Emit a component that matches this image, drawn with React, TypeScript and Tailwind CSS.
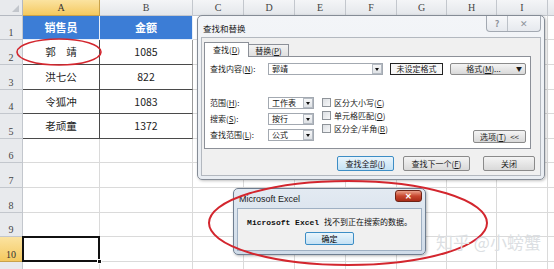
import React from "react"

const cjk = "font-['Noto_Sans_CJK_SC',sans-serif]"
const serif = "font-['Liberation_Serif','Noto_Sans_CJK_SC',serif]"

const letters = ["A", "B", "C", "D", "E", "F", "G", "H", "I", "J"]
const data: Record<number, [string, string]> = {
  2: ["郭　靖", "1085"],
  3: ["洪七公", "822"],
  4: ["令狐冲", "1083"],
  5: ["老顽童", "1372"],
}
const rowNums = [1, 2, 3, 4, 5, 6, 7, 8, 9, 10, 11]

function Key({ k }: { k: string }) {
  return (
    <>
      (<span className="underline">{k}</span>)
    </>
  )
}

function Sheet() {
  return (
    <div className="grid grid-cols-[23px_77px_93px_51px_51px_51px_51px_50px_50px_51px_30px] grid-rows-[16px_24px_25px_25px_24px_25px_24px_25px_25px_24px_25px_20px]">
      {/* corner */}
      <div className="relative border-r border-b border-[#b4b9c1] bg-[#e8eaed]">
        <div className="absolute right-[3px] bottom-[3px] h-0 w-0 border-l-[7px] border-b-[7px] border-l-transparent border-b-[#c2c6cc]" />
      </div>
      {letters.map((l, i) => (
        <div
          key={l}
          className={
            i === 0
              ? `flex items-center justify-center border-r border-b border-[#c9a24a] bg-gradient-to-b from-[#fbe3a0] to-[#f4c95e] text-[10px] text-[#333] ${serif}`
              : `flex items-center justify-center border-r border-b border-[#c3c7cd] bg-gradient-to-b from-[#f4f5f7] to-[#e4e7eb] text-[10px] text-[#444] ${serif}`
          }
        >
          {l === "J" ? "" : l}
        </div>
      ))}
      {rowNums.map((r) => (
        <React.Fragment key={r}>
          <div
            className={
              r === 10
                ? `flex items-end justify-center border-r border-b border-[#c9a24a] bg-gradient-to-b from-[#fbe3a0] to-[#f4c95e] pb-[1px] text-[10px] leading-none text-[#333] ${serif}`
                : `flex items-end justify-center border-r border-b border-[#c3c7cd] bg-[#e8eaed] pb-[1px] text-[10px] leading-none text-[#444] ${serif}`
            }
          >
            {r === 11 ? "" : r}
          </div>
          {letters.map((l, c) => {
            if (r === 1 && c < 2)
              return (
                <div
                  key={l}
                  className={`flex items-center justify-center border-r border-b border-[#e6eef9] bg-[#3c7dd6] text-[11px] font-bold text-white ${cjk}`}
                >
                  {c === 0 ? "销售员" : "金额"}
                </div>
              )
            if (data[r] && c < 2)
              return (
                <div
                  key={l}
                  className={
                    c === 0
                      ? `flex items-center justify-center border-r border-b border-[#4a4a4a] bg-white text-[10.5px] text-[#222] ${cjk}`
                      : `flex items-center justify-center border-r border-b border-r-[#9a9a9a] border-b-[#4a4a4a] bg-white text-[10.5px] text-[#222] ${cjk}`
                  }
                >
                  {data[r][c]}
                </div>
              )
            if (r === 10 && c === 0)
              return (
                <div key={l} className="relative border-r border-b border-[#dadada] bg-white">
                  <div className="absolute -left-px -top-px -right-px -bottom-px border-2 border-[#111]" />
                  <div className="absolute -right-[3px] -bottom-[3px] h-[5px] w-[5px] border border-white bg-[#111]" />
                </div>
              )
            return <div key={l} className="border-r border-b border-[#dadada] bg-white" />
          })}
        </React.Fragment>
      ))}
    </div>
  )
}

function Combo({ value, w }: { value: string; w: string }) {
  return (
    <div className={`flex h-[12px] ${w} items-center border border-[#a3a9b1] bg-white`}>
      <span className="flex-1 pl-[3px] text-[8px] leading-none text-[#111]">{value}</span>
      <div className="flex h-[10px] w-[10px] items-center justify-center border border-[#b5bbc3] bg-gradient-to-b from-[#f6f7f8] to-[#dfe2e6]">
        <div className="h-0 w-0 border-x-[2.5px] border-t-[3px] border-x-transparent border-t-[#111]" />
      </div>
    </div>
  )
}

function Check({ children }: { children: React.ReactNode }) {
  return (
    <div className="flex h-[13px] items-center gap-[3px]">
      <div className="h-[9px] w-[9px] border border-[#8e9399] bg-gradient-to-br from-[#dcdfe3] to-[#f7f8f9]" />
      <span className="text-[8px] leading-none">{children}</span>
    </div>
  )
}

function Btn({
  children,
  w,
  def,
}: {
  children: React.ReactNode
  w: string
  def?: boolean
}) {
  return (
    <div
      className={
        def
          ? `flex h-[15px] ${w} items-center justify-center rounded-[2px] border border-[#3c8dc5] bg-gradient-to-b from-[#eaf5fc] to-[#c4e1f4] text-[8px] leading-none`
          : `flex h-[15px] ${w} items-center justify-center rounded-[2px] border border-[#8a8a8a] bg-gradient-to-b from-[#f4f4f4] to-[#d9d9d9] text-[8px] leading-none`
      }
    >
      {children}
    </div>
  )
}

function FindDialog() {
  return (
    <div
      className={`absolute left-[197px] top-[15px] flex h-[165px] w-[348px] flex-col rounded-[5px] border border-[#858c96] bg-gradient-to-b from-[#f3f5f8] to-[#e9edf2] text-[#1a1a1a] shadow-[1px_1px_3px_rgba(0,0,0,0.25)] ${cjk}`}
    >
      {/* title bar */}
      <div className="flex h-[21px] shrink-0 items-start justify-between">
        <span className="pl-[5px] pt-[8px] text-[8.5px] leading-none">查找和替换</span>
        <div className="mr-[3px] flex h-[16px] overflow-hidden rounded-b-[4px] border border-t-0 border-[#a3a9b2] bg-gradient-to-b from-[#f7f8fa] to-[#e6e9ee] text-[#8d939b]">
          <div className="flex w-[21px] items-center justify-center border-r border-[#bcc1c8] text-[9px] font-bold">?</div>
          <div className="flex w-[32px] items-center justify-center text-[9px]">✕</div>
        </div>
      </div>
      {/* client */}
      <div className="mx-[3px] flex h-[139px] flex-col border border-[#b3b8bf] bg-[#f0f0f0]">
        <div className="flex items-end pl-[2px] pt-[4px]">
          <div className="relative z-10 -mb-px flex h-[15px] w-[45px] items-center justify-center border border-b-0 border-[#8c9098] bg-white text-[8px] leading-none">
            查找<Key k="D" />
          </div>
          <div className="flex h-[12px] w-[40px] items-center justify-center border border-b-0 border-l-0 border-[#8c9098] bg-gradient-to-b from-[#f3f3f3] to-[#e0e0e0] text-[8px] leading-none">
            替换<Key k="P" />
          </div>
        </div>
        <div className="ml-[2px] flex h-[93px] w-[327px] flex-col border border-[#8c9098] bg-white pl-[5px] pt-[6px] text-[8px] leading-none">
          <div className="flex items-center">
            <span className="w-[58px]">
              查找内容<Key k="N" />:
            </span>
            <Combo value="郭靖" w="w-[115px]" />
            <div className="ml-[7px] flex h-[12px] w-[53px] items-center justify-center border border-[#222] bg-[#f7f7f7]">
              未设定格式
            </div>
            <div className="ml-[7px] flex h-[12px] w-[76px] items-center justify-center rounded-[2px] border border-[#8a8a8a] bg-gradient-to-b from-[#f4f4f4] to-[#d9d9d9]">
              <span className="flex-1 text-center">
                格式<Key k="M" />...
              </span>
              <span className="pr-[3px] text-[6px]">▼</span>
            </div>
          </div>
          <div className="mt-[21px] flex">
            <div className="flex flex-col gap-[4px] pt-[1px]">
              <div className="flex items-center">
                <span className="w-[58px]">
                  范围<Key k="H" />:
                </span>
                <Combo value="工作表" w="w-[46px]" />
              </div>
              <div className="flex items-center">
                <span className="w-[58px]">
                  搜索<Key k="S" />:
                </span>
                <Combo value="按行" w="w-[46px]" />
              </div>
              <div className="flex items-center">
                <span className="w-[58px]">
                  查找范围<Key k="L" />:
                </span>
                <Combo value="公式" w="w-[46px]" />
              </div>
            </div>
            <div className="ml-[8px] flex flex-col">
              <Check>
                区分大小写<Key k="C" />
              </Check>
              <Check>
                单元格匹配<Key k="O" />
              </Check>
              <Check>
                区分全/半角<Key k="B" />
              </Check>
            </div>
            <div className="ml-auto mr-[4px] pt-[34px]">
              <div className="flex h-[13px] w-[53px] items-center justify-center gap-[4px] rounded-[2px] border border-[#8a8a8a] bg-gradient-to-b from-[#f4f4f4] to-[#d9d9d9]">
                <span>
                  选项<Key k="T" />
                </span>
                <span>&lt;&lt;</span>
              </div>
            </div>
          </div>
        </div>
        <div className="mt-[7px] flex justify-end pr-[5px]">
          <Btn w="w-[57px]" def>
            查找全部<Key k="I" />
          </Btn>
          <div className="ml-[9px]">
            <Btn w="w-[67px]">
              查找下一个<Key k="F" />
            </Btn>
          </div>
          <div className="ml-[13px]">
            <Btn w="w-[52px]">关闭</Btn>
          </div>
        </div>
      </div>
    </div>
  )
}

function MessageBox() {
  return (
    <div className="absolute left-[233px] top-[188px] flex h-[67px] w-[193px] flex-col rounded-[5px] border border-[#6f7e90] bg-gradient-to-b from-[#e3eaf2] to-[#cfdbe8] shadow-[1px_1px_3px_rgba(0,0,0,0.3)]">
      <div className="flex h-[19px] shrink-0 items-start justify-between">
        <span className="pl-[5px] pt-[6px] font-['Liberation_Sans',sans-serif] text-[9px] leading-none text-[#1a1a1a]">
          Microsoft Excel
        </span>
        <div className="mr-[3px] mt-[1px] flex h-[12px] w-[27px] items-center justify-center rounded-[3px] border border-[#6e2417] bg-gradient-to-b from-[#e9a08a] via-[#c8472f] to-[#a92c18] text-[8px] font-bold leading-none text-white">
          ✕
        </div>
      </div>
      <div className="mx-[3px] flex h-[43px] flex-col items-center border border-[#9fb0c3] bg-[#f0f0f0]">
        <p className="pt-[8px] font-['Liberation_Mono','Noto_Sans_CJK_SC',monospace] text-[8px] font-bold leading-[12px] text-[#111]">
          Microsoft Excel <span className="font-normal">找不到正在搜索的数据。</span>
        </p>
        <div
          className={`mt-[3px] flex h-[13px] w-[49px] items-center justify-center rounded-[2px] border border-[#3c8dc5] bg-gradient-to-b from-[#eaf5fc] to-[#c4e1f4] text-[8px] leading-none ${cjk}`}
        >
          确定
        </div>
      </div>
    </div>
  )
}

export default function App() {
  return (
    <div className="relative h-[269px] w-[554px] overflow-hidden bg-white">
      <Sheet />
      <FindDialog />
      <MessageBox />
      <svg className="pointer-events-none absolute left-0 top-0" width="554" height="269">
        <ellipse cx="59" cy="52" rx="42" ry="13" fill="none" stroke="#d3262e" strokeWidth="1.6" />
        <ellipse cx="348" cy="223" rx="139" ry="42" fill="none" stroke="#d3262e" strokeWidth="2" />
      </svg>
      <div className={`absolute left-[436px] top-[233px] text-[17px] leading-none text-[#dcdfe3] ${cjk}`}>
        知乎 @小螃蟹
      </div>
    </div>
  )
}
